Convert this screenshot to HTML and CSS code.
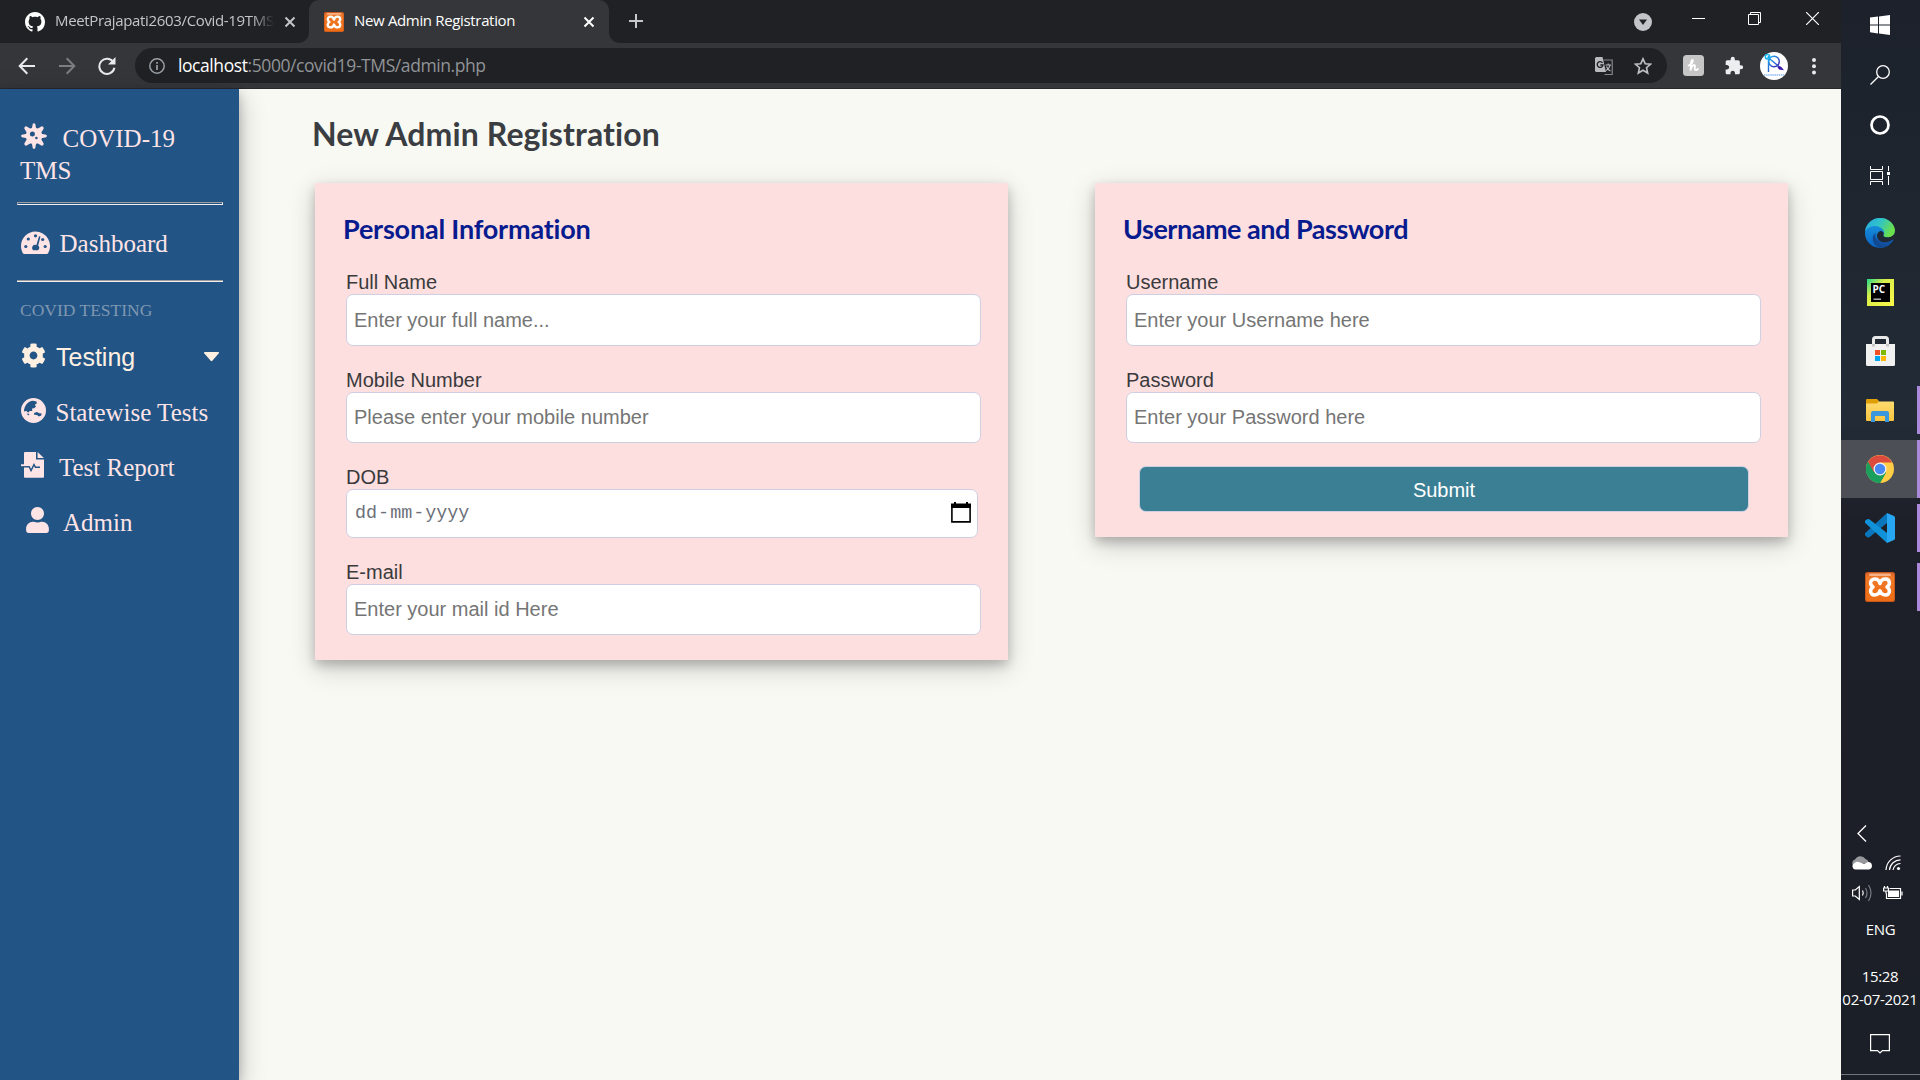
FILE: index.html
```html
<!DOCTYPE html>
<html lang="en">
<head>
<meta charset="utf-8">
<title>New Admin Registration</title>
<link rel="stylesheet" href="styles.css">
</head>
<body>
<svg width="0" height="0" class="defs">
  <defs>
    <linearGradient id="xg" x1="0" y1="0" x2="0" y2="1"><stop offset="0" stop-color="#d9632a"/><stop offset=".15" stop-color="#f07a28"/><stop offset="1" stop-color="#ee6d14"/></linearGradient>
    <linearGradient id="edgeTop" x1="0" y1="0" x2="1" y2=".4"><stop offset="0" stop-color="#2aa7e0"/><stop offset=".5" stop-color="#2fc3c9"/><stop offset="1" stop-color="#6be04a"/></linearGradient>
    <linearGradient id="edgeLow" x1="0" y1="0" x2="0" y2="1"><stop offset="0" stop-color="#1b9de2"/><stop offset="1" stop-color="#0a62c4"/></linearGradient>
    <linearGradient id="pcg" x1="0" y1="0" x2="1" y2="1"><stop offset="0" stop-color="#21d789"/><stop offset=".35" stop-color="#d8ee4a"/><stop offset="1" stop-color="#fcf84a"/></linearGradient>
    <linearGradient id="fold" x1="0" y1="0" x2="0" y2="1"><stop offset="0" stop-color="#ffdc70"/><stop offset="1" stop-color="#f9c540"/></linearGradient>
    <linearGradient id="pav" x1="0" y1="0" x2="1" y2="1"><stop offset="0" stop-color="#18b4f4"/><stop offset="1" stop-color="#3a16b0"/></linearGradient>
    <symbol id="xampp" viewBox="0 0 30 30">
      <rect width="30" height="30" rx="2.5" fill="#c9581c"/><rect x="1" y="1" width="28" height="28" rx="2" fill="url(#xg)"/>
      <rect x="4" y="1.6" width="22" height="2.4" rx="1.2" fill="#f6b184"/>
      <path d="M15 11.500C14 8 12 7 9.800 7C7 7 5.600 8.800 5.600 11C5.600 13 6.500 14 8 15C6.500 16 5.600 17.200 5.600 19.200C5.600 21.500 7.200 23 9.500 23C12 23 14 22 15 18.800C16 22 18 23 20.500 23C22.800 23 24.400 21.500 24.400 19.200C24.400 17.200 23.500 16 22 15C23.500 14 24.400 13 24.400 11C24.400 8.800 23 7 20.200 7C18 7 16 8 15 11.500Z" fill="none" stroke="#fff" stroke-width="3.500" stroke-linejoin="round"/>
    </symbol>
    <symbol id="close" viewBox="0 0 12 12"><path d="M1.500 1.500l9 9M10.500 1.500l-9 9" stroke="currentColor" stroke-width="2"/></symbol>
  </defs>
</svg>

<div class="screen">
  <div class="browser">
    <div class="tabs">
      <div class="tab tab-idle">
        <svg width="20" height="20" viewBox="0 0 16 16" fill="#fff"><path d="M8 0C3.580 0 0 3.580 0 8c0 3.540 2.290 6.530 5.470 7.590.4.070.55-.17.55-.38 0-.19-.01-.82-.01-1.490-2.010.37-2.530-.49-2.690-.94-.09-.23-.48-.94-.82-1.130-.28-.15-.68-.52-.01-.53.63-.01 1.080.58 1.230.82.72 1.210 1.870.87 2.330.66.07-.52.28-.87.51-1.070-1.780-.2-3.640-.89-3.640-3.950 0-.87.31-1.590.82-2.150-.08-.2-.36-1.020.08-2.120 0 0 .67-.21 2.200.82.64-.18 1.320-.27 2-.27s1.360.09 2 .27c1.530-1.040 2.200-.82 2.200-.82.44 1.100.16 1.920.08 2.120.51.56.82 1.270.82 2.150 0 3.070-1.870 3.750-3.650 3.950.29.25.54.73.54 1.480 0 1.070-.01 1.930-.01 2.200 0 .21.15.46.55.38A8.010 8.010 0 0 0 16 8c0-4.420-3.580-8-8-8z"/></svg>
        <span class="tab-title fade">MeetPrajapati2603/Covid-19TMS</span>
        <svg class="x" width="12" height="12"><use href="#close"/></svg>
      </div>
      <div class="tab tab-active">
        <svg width="20" height="20"><use href="#xampp"/></svg>
        <span class="tab-title reg">New Admin Registration</span>
        <svg class="x" width="12" height="12"><use href="#close"/></svg>
      </div>
      <svg class="plus" width="16" height="16" viewBox="0 0 16 16"><path d="M8 1v14M1 8h14" stroke="#c6c8cb" stroke-width="2"/></svg>
      <div class="window-controls">
        <div class="drop"><svg width="18" height="18" viewBox="0 0 18 18"><circle cx="9" cy="9" r="9" fill="#c2c4c9"/><path d="M5 6.500h8L9 12z" fill="#202124"/></svg></div>
        <div class="ctl"><svg width="13" height="13" viewBox="0 0 13 13"><path d="M0 6.500h13" stroke="#fff"/></svg></div>
        <div class="ctl restore"><svg width="13" height="13" viewBox="0 0 13 13" fill="none" stroke="#fff"><path d="M.5 2.500h10v10h-10zM2.500 2.500v-2h10v10h-2"/></svg></div>
        <div class="ctl"><svg width="13" height="13" viewBox="0 0 13 13"><path d="M0 0l13 13M13 0L0 13" stroke="#fff" stroke-width="1.200"/></svg></div>
      </div>
    </div>
    <div class="toolbar">
      <div class="tool"><svg width="18" height="18" viewBox="0 0 18 18" fill="none" stroke="#e8eaed" stroke-width="2"><path d="M17 9H2M9.300 1.300L1.700 9l7.600 7.700"/></svg></div>
      <div class="tool"><svg width="18" height="18" viewBox="0 0 18 18" fill="none" stroke="#7d7e82" stroke-width="2"><path d="M1 9h15M8.700 1.300L16.300 9l-7.600 7.700"/></svg></div>
      <div class="tool"><svg width="18" height="18" viewBox="0 0 18 18"><path d="M15.500 5.500A7.600 7.600 0 1 0 16.400 10.800" fill="none" stroke="#e8eaed" stroke-width="2"/><path d="M17.500 0v7.500H10z" fill="#e8eaed"/></svg></div>
      <div class="omnibox">
        <svg width="16" height="16" viewBox="0 0 16 16"><circle cx="8" cy="8" r="7.200" fill="none" stroke="#9aa0a6" stroke-width="1.500"/><path d="M8 7v5M8 4v1.800" stroke="#9aa0a6" stroke-width="1.700"/></svg>
        <span class="url"><b>localhost</b>:5000/covid19-TMS/admin.php</span>
        <div class="tool"><svg width="18" height="18" viewBox="0 0 18 18"><path d="M8.500 3h8.700v14.500H9.500" fill="none" stroke="#85878a" stroke-width="1.200"/><path d="M1.500 0h6l3.500 15H1.500A1.500 1.500 0 0 1 0 13.500v-12A1.500 1.500 0 0 1 1.500 0z" fill="#b9babd"/><path d="M7.500 5.800A2.900 2.900 0 1 0 8 8H5.300" fill="none" stroke="#202124" stroke-width="1.400"/><path d="M10.500 8h5.500M13.200 6.500V8M15 8c-.5 2.500-2 4.500-4 5.500M11.500 9.500c.5 1.500 2 3.500 4 4.500" stroke="#b9babd" stroke-width="1.100" fill="none"/></svg></div>
        <div class="tool"><svg width="18" height="18" viewBox="0 0 18 18"><path d="M9 1.800l2.200 4.900 5.300.5-4 3.500 1.200 5.300L9 13.200 4.300 16l1.200-5.300-4-3.500 5.300-.5z" fill="none" stroke="#bdc1c6" stroke-width="1.600"/></svg></div>
      </div>
      <div class="tool honey"><svg width="21" height="21" viewBox="0 0 21 21"><rect width="21" height="21" rx="3.500" fill="#c6c6c6"/><path d="M5.500 10.500c3-.8 5-4 4.200-5.500-1.500-.5-2 4-2.200 10.500.8-3.500 2-5.500 3.600-5.500 1.500.2.700 2 .6 3.500-.1 2 1.500 2.200 3.300.5" fill="none" stroke="#fff" stroke-width="1.800" stroke-linecap="round"/></svg></div>
      <div class="tool"><svg width="20" height="20" viewBox="0 0 24 24" fill="#eceef0"><path d="M20.500 11H19V7c0-1.100-.9-2-2-2h-4V3.500a2.500 2.500 0 0 0-5 0V5H4c-1.100 0-1.990.9-1.990 2v3.800H3.500c1.490 0 2.700 1.210 2.700 2.700s-1.210 2.700-2.700 2.700H2V20c0 1.100.9 2 2 2h3.800v-1.500c0-1.490 1.210-2.700 2.700-2.700s2.700 1.210 2.700 2.700V22H17c1.100 0 2-.9 2-2v-4h1.500a2.500 2.500 0 0 0 0-5z"/></svg></div>
      <div class="tool"><svg width="28" height="28" viewBox="0 0 28 28"><circle cx="14" cy="14" r="14" fill="#fff"/><g fill="none" stroke="url(#pav)" stroke-width="1.400"><circle cx="14" cy="9.500" r="5.300"/><path d="M8.500 4v16M7.500 5L22 17"/></g><circle cx="7.500" cy="4.800" r="2.200" fill="none" stroke="#18b4f4" stroke-width="1.500"/><path d="M17 14.500l4 .2 3 3.500-5-.8z" fill="#3a16b0"/><path d="M4 23h20" stroke="#a9cdf6" stroke-width="2" stroke-dasharray="1.500 .6"/></svg></div>
      <div class="tool"><svg width="4" height="18" viewBox="0 0 4 18" fill="#e8eaed"><circle cx="2" cy="3" r="2"/><circle cx="2" cy="9.200" r="2"/><circle cx="2" cy="15.400" r="2"/></svg></div>
    </div>

    <div class="page">
      <nav class="sidebar">
        <div class="brand"><svg width="26" height="26" viewBox="0 0 26 26" fill="#ffe4e6"><circle cx="13" cy="13" r="8.200"/><path d="M10.800 6L11.800.8Q13-.5 14.200.8L15.200 6zM10.800 20l1 5.200q1.200 1.300 2.400 0l1-5.200zM6 10.800L.8 11.800Q-.5 13 .8 14.200L6 15.200zM20 10.800l5.200 1q1.300 1.200 0 2.400l-5.200 1zM6 10L3.300 5.500Q3.200 3.500 5.200 3.300L10 6zM16 6l4.800-2.700q2 .2 1.900 2.200L20 10zM20 16l2.700 4.500q.1 2-1.900 2.200L16 20zM10 20l-4.800 2.700q-2-.2-1.900-2.200L6 16z"/><g fill="#225486"><circle cx="11.400" cy="11" r="2.500"/><circle cx="15.400" cy="15" r="1.300"/></g></svg><span>COVID-19</span><br>TMS</div>
        <hr class="rule double">
        <a class="item dash"><svg width="29" height="24" viewBox="0 0 29 24"><path d="M14.500.5C6.500.5 0 7 0 15c0 2.600.7 5 1.900 7.200.3.500.7.800 1.300.8h22.600c.6 0 1-.3 1.300-.8A14.500 14.500 0 0 0 14.500.5z" fill="#ffe4e6"/><g fill="#225486"><circle cx="14.500" cy="4.800" r="1.600"/><circle cx="7.300" cy="8" r="1.600"/><circle cx="4.800" cy="15.500" r="1.600"/><circle cx="21.700" cy="8.500" r="1.600"/><circle cx="24.200" cy="15.500" r="1.600"/><path d="M18 5.200l1.500.4-2.300 9a3.200 3.200 0 0 1-.1 4.600h-5.200a3.200 3.200 0 0 1 3.500-5.200z"/></g></svg><span>Dashboard</span></a>
        <hr class="rule">
        <div class="section">COVID TESTING</div>
        <a class="item testing"><svg width="25" height="25" viewBox="0 0 512 512" fill="#fff0e2"><path d="M487.400 315.700l-42.600-24.600c4.300-23.200 4.300-47 0-70.200l42.600-24.600c4.900-2.800 7.100-8.600 5.500-14-11.100-35.600-30-67.800-54.700-94.600-3.800-4.100-10-5.100-14.800-2.300L380.800 110c-17.900-15.400-38.500-27.300-60.800-35.100V25.800c0-5.600-3.900-10.500-9.400-11.700-36.700-8.200-74.300-7.800-109.200 0-5.500 1.200-9.400 6.100-9.400 11.700V75c-22.200 7.900-42.800 19.800-60.800 35.100L88.700 85.500c-4.900-2.800-11-1.900-14.800 2.300-24.700 26.700-43.600 58.900-54.700 94.600-1.700 5.400.6 11.200 5.500 14L67.300 221c-4.300 23.200-4.300 47 0 70.200l-42.600 24.600c-4.900 2.800-7.100 8.600-5.500 14 11.100 35.600 30 67.800 54.700 94.600 3.800 4.100 10 5.100 14.800 2.300l42.600-24.600c17.900 15.400 38.500 27.300 60.800 35.100v49.200c0 5.600 3.900 10.500 9.400 11.700 36.700 8.200 74.300 7.800 109.200 0 5.500-1.200 9.400-6.100 9.400-11.700v-49.200c22.200-7.900 42.800-19.800 60.800-35.100l42.600 24.600c4.900 2.800 11 1.900 14.800-2.300 24.700-26.700 43.600-58.900 54.700-94.600 1.500-5.500-.7-11.300-5.600-14.100zM256 336c-44.100 0-80-35.900-80-80s35.900-80 80-80 80 35.900 80 80-35.900 80-80 80z"/></svg><span>Testing</span><svg class="caret" width="15" height="10" viewBox="0 0 15 10" fill="#fff0e2"><path d="M.8 0h13.400c.8 0 1 .8.600 1.300L8.300 8.800c-.5.500-1.100.5-1.600 0L.2 1.300C-.2.800 0 0 .8 0z"/></svg></a>
        <a class="item globe"><svg width="25" height="25" viewBox="0 0 25 25"><circle cx="12.500" cy="12.500" r="12.500" fill="#ffe4e6"/><path d="M3 13.500C3 7.500 7 3.200 12 2.700l3.500.8.300 2-2 1.200 1.200 1.700-1.800 1.800-2.200.4.300 2.300-2.500.1-1.700 1.700-1.600-1.600zM13 15l3-1 2.300 1.200 2.400.3-.5 2-2.400 1-1.800-1.500-2.700-.3zM5.500 15.500l3 .5-1 1.500z" fill="#225486"/></svg><span>Statewise Tests</span></a>
        <a class="item report"><svg width="23" height="26" viewBox="0 0 23 26"><path d="M4.300 0H15v7.500h8V24.500c0 .8-.5 1.300-1.300 1.300H4.300c-.8 0-1.300-.5-1.300-1.300V1.300C3 .5 3.500 0 4.300 0zM16.600 0l6.300 6h-6.300z" fill="#ffe4e6"/><path d="M3 14.800h5.200l1.800 3.800 3-6 1.500 2.700H19" fill="none" stroke="#225486" stroke-width="1.400"/><path d="M0 13.200h6" stroke="#ffe4e6" stroke-width="1.800"/></svg><span>Test Report</span></a>
        <a class="item admin"><svg width="23" height="26" viewBox="0 0 448 512" fill="#ffe4e6"><path d="M224 256c70.700 0 128-57.300 128-128S294.700 0 224 0 96 57.300 96 128s57.300 128 128 128zm89.600 32h-16.700c-22.200 10.200-46.900 16-72.900 16s-50.600-5.800-72.900-16h-16.700C60.200 288 0 348.200 0 422.400V464c0 26.500 21.500 48 48 48h352c26.500 0 48-21.500 48-48v-41.600c0-74.200-60.200-134.400-134.400-134.400z"/></svg><span>Admin</span></a>
      </nav>
      <main class="content">
        <h1>New Admin Registration</h1>
        <form class="cards">
          <section class="card">
            <h2>Personal Information</h2>
            <label>Full Name</label><input class="first" type="text" placeholder="Enter your full name...">
            <label>Mobile Number</label><input type="text" placeholder="Please enter your mobile number">
            <label>DOB</label>
            <div class="date"><span>dd</span><span>-</span><span>mm</span><span>-</span><span>yyyy</span>
              <svg width="20" height="21" viewBox="0 0 20 21"><path d="M.9 3.500h18.200v16.400H.9z" fill="none" stroke="#000" stroke-width="1.600"/><path d="M0 1.500h3V0h2v1.500h10V0h2v1.500h3V6H0z"/></svg></div>
            <label>E-mail</label><input type="text" placeholder="Enter your mail id Here">
          </section>
          <section class="card">
            <h2 class="h-user">Username and Password</h2>
            <label>Username</label><input class="first" type="text" placeholder="Enter your Username here">
            <label>Password</label><input type="text" placeholder="Enter your Password here">
            <button type="button">Submit</button>
          </section>
        </form>
      </main>
    </div>
  </div>

  <aside class="taskbar">
    <div class="sys"><svg width="20" height="20" viewBox="0 0 20 20" fill="#fff"><path d="M0 2.600L8 1.500v7.900H0zM9 1.400L20 0v9.400H9zM0 10.400h8v8L0 17.300zM9 10.400h11V20L9 18.500z"/></svg></div>
    <div class="sys"><svg width="20" height="20" viewBox="0 0 20 20" fill="none" stroke="#fff" stroke-width="1.300"><circle cx="13" cy="7" r="6.300"/><path d="M8.500 11.500L.5 19.500"/></svg></div>
    <div class="sys"><svg width="20" height="20" viewBox="0 0 20 20"><circle cx="10" cy="10" r="8.500" fill="none" stroke="#fff" stroke-width="2.700"/></svg></div>
    <div class="sys"><svg width="20" height="19" viewBox="0 0 20 19" fill="none" stroke="#fff"><path d="M.5 0v3.500h12V0M.5 5.500h12v8H.5zM.5 19v-3.500h12V19M18.500 0v5M18.500 10v9"/><path d="M17 6h3v3h-3z" fill="#fff" stroke="none"/></svg></div>
    <div class="apps">
      <div class="app"><svg width="30" height="30" viewBox="0 0 30 30"><circle cx="15" cy="15" r="15" fill="url(#edgeLow)"/><path d="M0 13.500C1 5.500 7.500 0 15.200 0 24 0 30 6.500 30 12.800c0 4-3 6.700-6.800 6.700-3.500 0-5.200-1.200-4.700-2.400.7-1.200 1-2.500.1-4.300C17 9.500 13.500 8 10 8 5.500 8 1.500 10.500 0 13.500z" fill="url(#edgeTop)"/><path d="M10.500 15c-1 4 1.500 9.500 8 10 3.500.3 6.500-1.500 8-2.600C23.500 28 19 30 15 30c-5-1.500-7.500-5.500-7.300-9.500.1-2.300 1.200-4.300 2.800-5.500z" fill="#114a92"/><path d="M30 13v8l-3.500 1.500c-2 1.500-5 2.500-8 2.300-4-.5-7-4-6.500-7.800.3-1.500 1.500-3.500 3.200-4 2-.2 3.500 1.500 3.600 2.800-.3 1.300-1 1.800.1 2.700 1.200.8 3 1 4.500.8C27 19 30 16.500 30 13z" fill="#202833"/><path d="M12.300 18.500c.5 4 4.500 6 7.500 5.700 3-.2 5-1.200 7-2 1.500 0 1 .8-.4 2.300-3 3-7 3.500-10 2.500-3-1.200-4.500-5-4.100-8.500z" fill="#1250a0"/></svg></div>
      <div class="app"><svg width="27" height="27" viewBox="0 0 27 27"><rect width="27" height="27" fill="url(#pcg)"/><rect x="4" y="4" width="19" height="19" fill="#000"/><text x="5.500" y="13.500" class="pc">PC</text><path d="M6.500 20.200h7.500" stroke="#bbb" stroke-width="1.400"/></svg></div>
      <div class="app"><svg width="29" height="30" viewBox="0 0 29 30"><path d="M7.500 10V3.500a2 2 0 0 1 2-2h10a2 2 0 0 1 2 2V10" fill="none" stroke="#e9e9e9" stroke-width="3"/><path d="M0 8h29v20.500a1.500 1.500 0 0 1-1.500 1.500h-26A1.500 1.500 0 0 1 0 28.500z" fill="#f1f1f1"/><path d="M6 8h3v2.500H6zM20 8h3v2.500h-3z" fill="#c5c5c5"/><path d="M9 14h5v5H9z" fill="#f25022"/><path d="M15 14h5v5h-5z" fill="#7fba00"/><path d="M9 20h5v5H9z" fill="#00a4ef"/><path d="M15 20h5v5h-5z" fill="#ffb900"/></svg></div>
      <div class="app run"><svg width="28" height="23" viewBox="0 0 28 23"><path d="M0 1a1 1 0 0 1 1-1h10l2 2v4H0z" fill="#df9f07"/><path d="M0 4.500h11l2-2h14a1 1 0 0 1 1 1V21a1 1 0 0 1-1 1H1a1 1 0 0 1-1-1z" fill="url(#fold)"/><path d="M5 23v-9a2 2 0 0 1 2-2h14a2 2 0 0 1 2 2v9h-4v-6H9v6z" fill="#3a96dd"/></svg></div>
      <div class="app run current"><svg width="28" height="28" viewBox="0 0 28 28"><circle cx="14" cy="14" r="14" fill="#ffcd46"/><path d="M14 14L1.900 7A14 14 0 0 0 14 28l6-10.500z" fill="#1a9f5c"/><path d="M14 14L1.900 7A14 14 0 0 1 26.200 7.500H14z" fill="#dd4b3e"/><path d="M1.900 7L8 17.500l3-7z" fill="#dd4b3e"/><path d="M1.900 7L8 17.500A7 7 0 0 0 14 20.500L20 17.500 14 28A14 14 0 0 1 1.900 7z" fill="#1a9f5c"/><circle cx="14" cy="14" r="6.500" fill="#f1f1f1"/><circle cx="14" cy="14" r="5.200" fill="#4688f4"/></svg></div>
      <div class="app run"><svg width="30" height="30" viewBox="0 0 30 30"><path d="M22 0L0 20.200v2L2.500 24.500l1.800-.2L22 10z" fill="#0b76bb"/><path d="M22 30L0 9.800v-2L2.500 6l1.800.2L22 20z" fill="#1191d8"/><path d="M22 0l7 3a2 2 0 0 1 1 1.800v20.400a2 2 0 0 1-1 1.800l-7 3z" fill="#27a7f2"/></svg></div>
      <div class="app run"><svg width="30" height="30"><use href="#xampp"/></svg></div>
    </div>
    <div class="tray">
      <div class="tray-cell"><svg width="10" height="17" viewBox="0 0 10 17"><path d="M9 .5l-8 8 8 8" fill="none" stroke="#fff" stroke-width="1.300"/></svg></div><div class="tray-cell"></div>
      <div class="tray-cell"><svg width="20" height="14" viewBox="0 0 20 14"><path d="M1 9a3.500 3.500 0 0 1 2-5.500A6 6 0 0 1 13.500 3 5 5 0 0 1 17 7z" fill="#96989c"/><path d="M3.500 13.500a3.400 3.400 0 0 1-1-6.500Q5 5 8 6.500l4 1.500 4-2a3.800 3.800 0 0 1 1 7.500z" fill="#fff"/></svg></div>
      <div class="tray-cell"><svg width="16" height="16" viewBox="0 0 16 16" fill="none" stroke="#fff" stroke-width="1.200"><path d="M1 15A14.500 14.500 0 0 1 15.500 1M4.500 15A11 11 0 0 1 15.500 4.800M8 15a7.500 7.500 0 0 1 7.500-6.500"/><circle cx="13.500" cy="13.500" r="1.600" fill="#fff" stroke="none"/></svg></div>
      <div class="tray-cell"><svg width="20" height="18" viewBox="0 0 20 18" fill="none" stroke="#fff" stroke-width="1.200"><path d="M.6 6h2.700l4-3.500v13l-4-3.500H.6zM10.500 6.500q1.500 2.500 0 5"/><path d="M13.500 4q3 5 0 10M16.500 1q5 8 0 16" stroke="#777b82"/></svg></div>
      <div class="tray-cell"><svg width="20" height="14" viewBox="0 0 20 14"><path d="M6.500 2.500h11v10H3.500v-5M19 5.500v4M1.500 0v2M4.500 0v2M.6 2h4.800v3H.6zM3 5v2.500" fill="none" stroke="#fff" stroke-width="1.200"/><path d="M5 4.500h11v6.500H5z" fill="#fff"/></svg></div>
    </div>
    <div class="lang">ENG</div>
    <div class="clock">15:28<br>02-07-2021</div>
    <svg class="notice" width="20" height="20" viewBox="0 0 20 20"><path d="M.6.600h18.800v16h-7L10 19l-2.400-2.400h-7z" fill="none" stroke="#fff" stroke-width="1.200"/></svg>
    <div class="peek"></div>
  </aside>
</div>
</body>
</html>
```
FILE: styles.css
```css
* { box-sizing: border-box; }
body { margin: 0; overflow: hidden; font-family: "Liberation Sans", Arial, sans-serif; }
svg { display: block; flex: none; }
.defs { position: absolute; }
.screen { display: flex; width: 1920px; height: 1080px; }
.browser { width: 1841px; display: flex; flex-direction: column; }

/* Tab strip */
.tabs { height: 43px; display: flex; background: #202124; color: #c3c5c9; }
.tab { display: flex; align-items: center; height: 43px; font: 15px "Open Sans", "Noto Sans", sans-serif; }
.tab-idle { width: 309px; padding: 0 13px 0 25px; }
.tab-title { margin-left: 10px; width: 219px; line-height: 24px; padding-bottom: 3px; white-space: nowrap; overflow: hidden; letter-spacing: -.34px; }
.fade { -webkit-mask-image: linear-gradient(to right, #000 90%, transparent 100%); mask-image: linear-gradient(to right, #000 90%, transparent 100%); }
.x { margin-left: auto; }
.tab-active { position: relative; width: 300px; padding: 0 14px 0 15px; background: #35363a; color: #fff; border-radius: 10px 10px 0 0; }
.tab-active::before, .tab-active::after { content: ""; position: absolute; bottom: 0; width: 10px; height: 10px; }
.tab-active::before { left: -10px; background: radial-gradient(circle at 0 0, transparent 9.5px, #35363a 10px); }
.tab-active::after { right: -10px; background: radial-gradient(circle at 100% 0, transparent 9.5px, #35363a 10px); }
.plus { margin: 13px 0 0 19px; }
.window-controls { display: flex; margin-left: auto; }
.drop { width: 54px; padding: 13px 0 0 18px; }
.ctl { width: 57px; display: flex; justify-content: center; padding-top: 12px; }
.restore { padding-right: 2px; }

/* Toolbar */
.toolbar { height: 46px; display: flex; align-items: center; padding: 0 7px; background: #35363a; border-bottom: 1px solid #27282b; }
.tool { width: 40px; display: flex; justify-content: center; }
.honey { padding-right: 1px; }
.omnibox { flex: 1; height: 35px; margin: 0 7px 0 8px; padding: 0 4px 0 14px; border-radius: 18px; background: #202124; display: flex; align-items: center; }
.url { flex: 1; margin-left: 13px; padding-bottom: 1px; font: 17.5px "Open Sans", "Noto Sans", sans-serif; line-height: 30px; letter-spacing: -.42px; color: #909397; }
.url b { font-weight: 400; color: #fff; }
.omnibox .tool + .tool { margin-left: -1px; }

/* Page */
.page { flex: 1; display: flex; background: #f8f9f3; }
.sidebar { position: relative; width: 239px; padding-top: 34px; background: #225486; color: #ffe4e6; font: 25px "Liberation Serif", "Times New Roman", serif; box-shadow: 0 5px 10px rgba(0,0,0,.2), 0 8px 25px rgba(0,0,0,.25); }
.brand { padding-left: 20px; height: 65px; line-height: 32px; }
.brand svg { display: inline-block; margin: 0 15.5px 0 1px; vertical-align: -2px; }
.rule { margin: 10px 16px 10px 17px; height: 2px; border: 0; border-top: 1px solid #9c9b9e; border-bottom: 1px solid #f2f0ee; }
.rule.double { height: 3px; margin-top: 14px; border: 1px solid; border-color: #9c9b9e #f2f0ee #f2f0ee #9c9b9e; }
.item { display: flex; align-items: center; height: 55px; padding: 0 20px 0 21px; white-space: nowrap; }
.item span { padding-top: 2px; }
.dash span { margin-left: 9.5px; }
.section { margin-top: 18px; height: 20px; padding-left: 20px; font-size: 17.5px; line-height: 20px; color: #7f97b0; }
.testing { margin-top: 9px; color: #fff0e2; font-family: "Liberation Sans", Arial, sans-serif; font-size: 25px; }
.testing span { margin-left: 10px; }
.testing svg { margin-bottom: 2px; }
.testing .caret { margin: 0 0 0 auto; }
.globe span { margin-left: 9.5px; }
.globe svg, .report svg, .admin svg { margin-bottom: 3px; }
.report span { margin-left: 15px; }
.admin { padding-left: 26px; }
.admin span { margin-left: 14px; }
.content { flex: 1; padding: 24px 53px 0 76px; }
h1, h2 { margin: 0; font-family: Lato, sans-serif; font-weight: 700; font-variant-ligatures: none; white-space: nowrap; }
h1 { margin-left: -3px; height: 70px; font-size: 32px; line-height: 42px; letter-spacing: .12px; color: #3a3d42; }
.cards { display: flex; align-items: flex-start; gap: 87px; }
.card { width: 693px; padding: 25px 27px 25px 31px; background: #fddfe0; box-shadow: 0 5px 10px rgba(0,0,0,.2), 0 8px 25px rgba(0,0,0,.19); }
h2 { height: 63px; margin-left: -3px; font-size: 27px; line-height: 42px; letter-spacing: -.2px; color: #071b8f; }
.h-user { letter-spacing: -.47px; }
label { display: block; height: 23px; font-size: 20px; line-height: 23px; color: #3a3a3c; }
input, .date, button { display: block; border: 1px solid #cfcfe3; border-radius: 7px; font: 20px "Liberation Sans", Arial, sans-serif; }
input { width: 635px; height: 51px; margin: 0 0 23px; padding: 0 7px; background: #fff; outline: 0; }
input.first { height: 52px; }
input::placeholder { color: #757575; }
.card > :last-child { margin-bottom: 0; }
.date { display: flex; align-items: center; width: 632px; height: 49px; margin-bottom: 23px; padding: 0 6px 0 8px; background: #fff; color: #6d7079; font: 18.4px "Liberation Mono", monospace; }
.date span { margin-right: 1px; }
.date svg { margin: 0 0 2px auto; }
button { width: 610px; height: 46px; margin-left: 13px; padding-top: 3px; background: #3b7f95; color: #fff; }

/* Taskbar */
.taskbar { width: 79px; display: flex; flex-direction: column; color: #fff; font: 15px "Open Sans", "Noto Sans", sans-serif; background: linear-gradient(#1c212b, #1f2630 20%, #222b36 39%, #1e2029 48%, #1c1f28 75%, #1b1f27); }
.sys { height: 50px; display: flex; align-items: center; justify-content: center; padding-right: 1px; }
.apps { display: flex; flex-direction: column; gap: 1px; padding-top: 4px; }
.app { position: relative; height: 58px; display: flex; align-items: center; justify-content: center; padding-right: 1px; }
.run::after { content: ""; position: absolute; right: 0; top: 5px; width: 3px; height: 48px; background: #ad89dc; }
.current { background: #4c4f56; }
.current::after { top: 0; height: 58px; }
.pc { font: bold 10px "Open Sans", sans-serif; fill: #fff; }
.tray { display: grid; grid-template-columns: 32px 30px; grid-auto-rows: 30px; margin: 202px 0 0 5px; }
.tray-cell { display: flex; align-items: center; justify-content: center; }
.lang { margin-top: 10px; text-align: center; line-height: 22px; letter-spacing: -.3px; }
.clock { margin-top: 25px; text-align: center; line-height: 22.500px; letter-spacing: -.3px; white-space: nowrap; padding-right: 1px; }
.notice { margin: 24px 0 0 29px; }
.peek { margin-top: 20px; height: 6px; border-top: 1px solid #71747a; }
```
